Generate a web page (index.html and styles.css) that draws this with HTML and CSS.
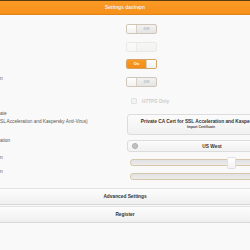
FILE: index.html
```html
<!DOCTYPE html>
<html>
<head>
<meta charset="utf-8">
<link rel="stylesheet" href="styles.css">
</head>
<body>
<div class="header"><h1 class="title">Settings dashvpn</h1></div>
<div class="content">
  <div class="row r-t1">
    <div class="label"></div>
    <div class="ctrl"><div class="toggle off"><span class="knob"></span><span class="tx">Off</span></div></div>
  </div>
  <div class="row r-t">
    <div class="label"></div>
    <div class="ctrl"><div class="toggle off disabled"><span class="knob"></span><span class="tx"></span></div></div>
  </div>
  <div class="row r-t">
    <div class="label"></div>
    <div class="ctrl"><div class="toggle on"><span class="tx">On</span><span class="knob"></span></div></div>
  </div>
  <div class="row r-t">
    <div class="label">n</div>
    <div class="ctrl"><div class="toggle off"><span class="knob"></span><span class="tx">Off</span></div></div>
  </div>
  <div class="row r-chk">
    <div class="label"></div>
    <div class="ctrl"><div class="check"><span class="box"></span><span class="chk-tx">HTTPS Only</span></div></div>
  </div>
  <div class="row r-btn">
    <div class="label lbl-btn">ate<br>SL Acceleration and Kaspersky Anti-Virus)</div>
    <div class="ctrl"><div class="btn"><div class="btn-main">Private CA Cert for SSL Acceleration and Kaspersky Anti-Virus)</div><div class="btn-sub">Import Certificate</div></div></div>
  </div>
  <div class="row r-sel">
    <div class="label">ation</div>
    <div class="ctrl"><div class="select"><span class="sel-ico"></span><span class="sel-tx">US West</span></div></div>
  </div>
  <div class="row r-sl1">
    <div class="label">n</div>
    <div class="ctrl"><div class="slider"><span class="track"></span><span class="handle"></span></div></div>
  </div>
  <div class="row r-sl2">
    <div class="label">n</div>
    <div class="ctrl"><div class="slider"><span class="track"></span></div></div>
  </div>
</div>
<div class="bars">
  <div class="bar">Advanced Settings</div>
  <div class="bar">Register</div>
</div>
</body>
</html>
```
FILE: styles.css
```css
html, body {
  margin: 0;
  padding: 0;
  background: #f9f9f9;
  font-family: "Liberation Sans", Arial, sans-serif;
  overflow: hidden;
  width: 250px;
  height: 250px;
}
.header {
  height: 13px;
  border-top: 1px solid #5b3c14;
  border-bottom: 1px solid #e0851a;
  background: linear-gradient(#fa9a25, #f6901b);
  display: flex;
  align-items: center;
  justify-content: center;
}
.title {
  margin: 0;
  font-size: 4.8px;
  font-weight: bold;
  color: #fff;
  text-shadow: 0 0 0.5px #b8660d;
}
.content {
  display: flex;
  flex-direction: column;
  padding-top: 9px;
}
.row {
  display: grid;
  grid-template-columns: 126px 170px;
  align-items: start;
}
.r-t1 { height: 10px; }
.r-t { height: 10px; margin-top: 7.7px; }
.r-chk { margin-top: 11px; height: 6px; }
.r-btn { margin-top: 10px; height: 20px; }
.r-sel { margin-top: 6px; height: 11px; }
.r-sl1 { margin-top: 6px; height: 11px; }
.r-sl2 { margin-top: 3px; height: 10px; }
.label {
  font-size: 4.7px;
  line-height: 8px;
  color: #555;
  margin-top: -3px;
  white-space: nowrap;
}
.r-t .label { margin-top: -2px; }
.label.lbl-btn { margin-top: -4px; }
.toggle {
  width: 29px;
  height: 8px;
  border: 1px solid #cfc6b7;
  border-radius: 2px;
  background: linear-gradient(#f2f2f2, #e4e4e4);
  display: flex;
  align-items: stretch;
  overflow: hidden;
}
.knob {
  width: 9px;
  background: linear-gradient(#ffffff, #f1f1f1);
  border-right: 1px solid #d8d0c2;
}
.toggle.on .knob {
  border-right: none;
  border-left: 1px solid #d8d0c2;
}
.tx {
  flex: 1;
  font-size: 4px;
  line-height: 8px;
  text-align: center;
  color: #b5b5b5;
  font-weight: bold;
}
.toggle.on {
  border-color: #d2a46a;
}
.toggle.on .tx {
  background: linear-gradient(#f99a22, #f38c15);
  color: #fff;
}
.toggle.disabled {
  opacity: 0.3;
}
.check {
  display: flex;
  align-items: center;
  gap: 5px;
  padding-left: 5px;
  opacity: 0.35;
}
.box {
  width: 4px;
  height: 4px;
  border: 0.5px solid #bbb;
  border-radius: 1px;
  background: #e9e9e9;
}
.chk-tx {
  font-size: 4.7px;
  font-weight: bold;
  color: #777;
}
.btn {
  margin-left: 1px;
  width: 146px;
  height: 19px;
  border: 1px solid #dcdcdc;
  border-radius: 3px;
  background: linear-gradient(#fbfbfb, #f1f1f1);
  display: flex;
  flex-direction: column;
  align-items: center;
  justify-content: center;
  overflow: hidden;
}
.btn-main {
  font-size: 4.8px;
  font-weight: bold;
  color: #333;
  white-space: nowrap;
  line-height: 6.5px;
  margin-left: 24px;
}
.btn-sub {
  font-size: 3.4px;
  font-weight: bold;
  color: #444;
  line-height: 5px;
}
.select {
  margin-left: 1px;
  width: 166px;
  height: 10px;
  border: 1px solid #dcdcdc;
  border-radius: 3px;
  background: linear-gradient(#fbfbfb, #f1f1f1);
  display: flex;
  align-items: center;
}
.sel-ico {
  width: 4px;
  height: 4px;
  margin-left: 4px;
  border-radius: 50%;
  background: #c4c4c4;
  border: 0.5px solid #aaa;
}
.sel-tx {
  flex: 1;
  text-align: center;
  font-size: 4.8px;
  font-weight: bold;
  color: #333;
  margin-right: 8px;
}
.slider {
  position: relative;
  height: 11px;
  display: flex;
  align-items: center;
}
.track {
  margin-left: 4px;
  width: 160px;
  height: 5px;
  border: 1px solid #d6c8ab;
  border-radius: 3px;
  background: linear-gradient(#e2e2e2, #ececec);
}
.handle {
  position: absolute;
  left: 101px;
  top: 0;
  width: 7px;
  height: 10px;
  border: 0.5px solid #e0e0e0;
  border-radius: 1.5px;
  background: linear-gradient(#ffffff, #f3f3f3);
}
.bars {
  margin-top: 7px;
  display: flex;
  flex-direction: column;
  gap: 1px;
}
.bar {
  height: 15px;
  border-top: 1px solid #e2e2e2;
  border-bottom: 1px solid #d8d8d8;
  background: linear-gradient(#fdfdfd, #efefef);
  display: flex;
  align-items: center;
  justify-content: center;
  font-size: 4.8px;
  font-weight: bold;
  color: #333;
}
```
